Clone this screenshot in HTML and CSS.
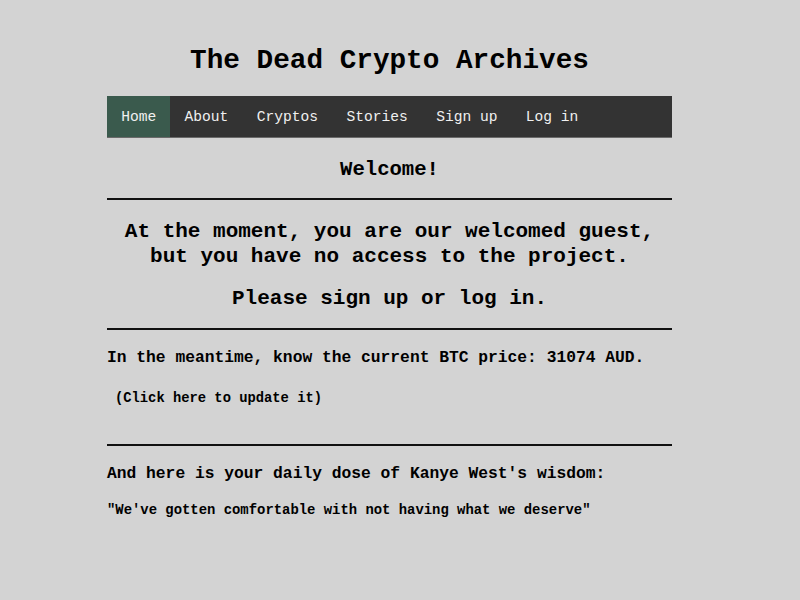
FILE: index.html
```html
<!DOCTYPE html>
<html>
<head>
<meta charset="utf-8">
<title>The Dead Crypto Archives</title>
<link rel="stylesheet" href="styles.css">
</head>
<body>
<div class="page">
  <h1 class="title">The Dead Crypto Archives</h1>
  <nav class="nav">
    <a class="nav-item active" href="#">Home</a>
    <a class="nav-item" href="#">About</a>
    <a class="nav-item" href="#">Cryptos</a>
    <a class="nav-item" href="#">Stories</a>
    <a class="nav-item" href="#">Sign up</a>
    <a class="nav-item" href="#">Log in</a>
  </nav>
  <h2 class="welcome">Welcome!</h2>
  <hr class="rule">
  <p class="big">At the moment, you are our welcomed guest,<br>but you have no access to the project.</p>
  <p class="big please">Please sign up or log in.</p>
  <hr class="rule">
  <p class="btc">In the meantime, know the current BTC price: 31074 AUD.</p>
  <button class="update">(Click here to update it)</button>
  <hr class="rule rule-low">
  <p class="kanye">And here is your daily dose of Kanye West's wisdom:</p>
  <p class="quote">"We've gotten comfortable with not having what we deserve"</p>
</div>
</body>
</html>
```
FILE: styles.css
```css
html, body {
  margin: 0;
  padding: 0;
  background: #d3d3d3;
}
body {
  font-family: "Liberation Mono", "Courier New", monospace;
  color: #000;
}
.page {
  width: 565px;
  margin-left: 107px;
  padding-top: 44px;
  display: flex;
  flex-direction: column;
}
.title {
  margin: 0;
  font-size: 27.7px;
  line-height: 34px;
  font-weight: bold;
  text-align: center;
}
.nav {
  margin-top: 18px;
  height: 42px;
  background: #333333;
  display: flex;
  border-bottom: 1px solid #6a6a6a;
  box-sizing: border-box;
}
.nav-item {
  display: block;
  padding: 0 14.2px;
  line-height: 42px;
  font-size: 14.6px;
  color: #f0f0f0;
  text-decoration: none;
}
.nav-item.active {
  background: #3a5a4d;
}
.welcome {
  margin: 19px 0 0;
  font-size: 20.6px;
  line-height: 26px;
  text-align: center;
}
.rule {
  margin: 15px 0 0;
  border: none;
  height: 2px;
  background: #111;
}
.big {
  margin: 19px 0 0;
  font-size: 21px;
  line-height: 25px;
  font-weight: bold;
  text-align: center;
}
.please {
  margin-top: 17px;
}
.big + .rule, .please + .rule {
  margin-top: 17px;
}
.btc {
  margin: 18px 0 0;
  font-size: 16.3px;
  line-height: 20px;
  font-weight: bold;
}
.update {
  align-self: flex-start;
  margin: 23px 0 0;
  padding: 0 8px;
  border: none;
  background: transparent;
  font-family: "Liberation Mono", "Courier New", monospace;
  font-size: 13.8px;
  line-height: 16px;
  font-weight: bold;
  color: #000;
}
.rule-low {
  margin-top: 37px;
}
.kanye {
  margin: 18px 0 0;
  font-size: 16.3px;
  line-height: 20px;
  font-weight: bold;
}
.quote {
  margin: 18px 0 0;
  font-size: 13.9px;
  line-height: 16px;
  font-weight: bold;
}
```
